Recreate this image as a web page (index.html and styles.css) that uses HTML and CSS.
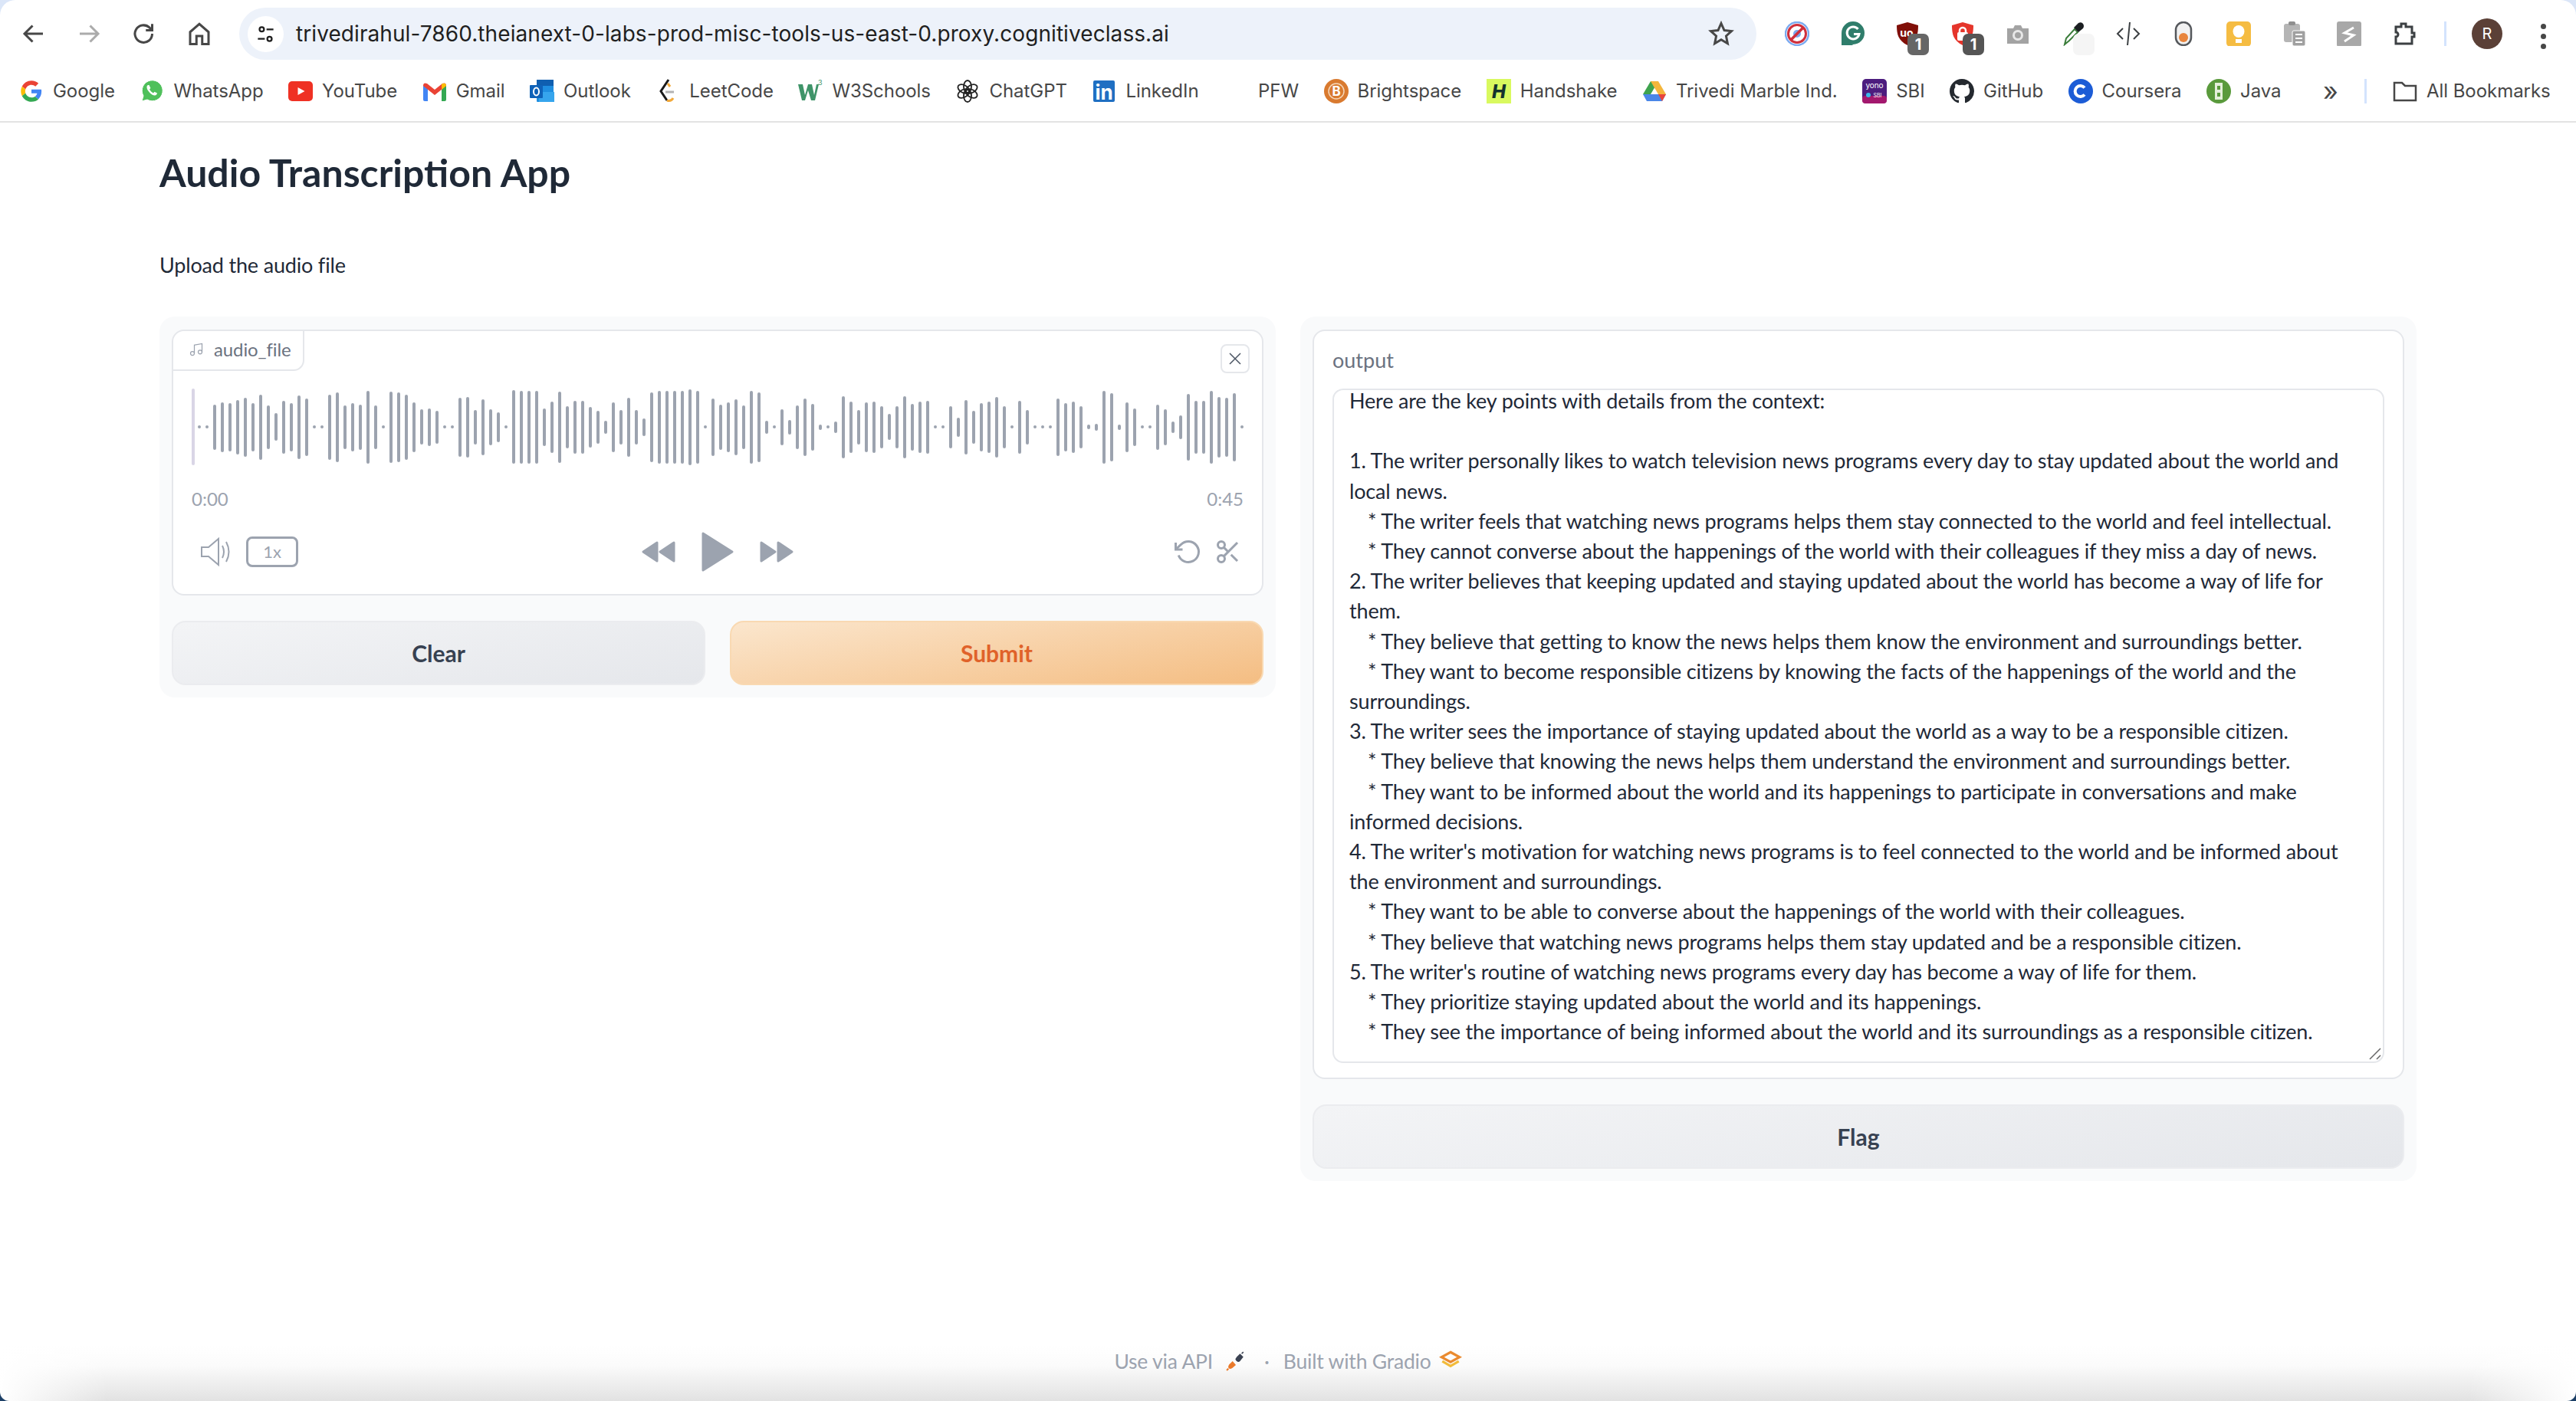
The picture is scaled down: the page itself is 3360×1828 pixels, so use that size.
FILE: index.html
```html
<!DOCTYPE html>
<html lang="en">
<head>
  <meta charset="UTF-8">
  <title>Audio Transcription App</title>
  <link rel="stylesheet" href="styles.css">
</head>
<body>

  <header class="chrome">
    <div class="toolbar">
      <div class="nav">
        <svg class="nav-icon" viewBox="0 0 24 24"><path d="M20 12H5M11 5l-7 7 7 7"/></svg>
        <svg class="nav-icon off" viewBox="0 0 24 24"><path d="M4 12h15M13 5l7 7-7 7"/></svg>
        <svg class="nav-icon" viewBox="0 0 24 24"><path d="M19 12a7.5 7.5 0 1 1-2.4-5.4L19 9M19 3.5V9h-5.5"/></svg>
        <svg class="nav-icon" viewBox="0 0 24 24"><path d="M4 10.5 12 3.5l8 7V21h-5.5v-7h-5v7H4z"/></svg>
      </div>
      <div class="omnibox">
        <span class="site-btn">
          <svg viewBox="0 0 24 24"><circle cx="7.5" cy="6.5" r="2.6"/><path d="M13 6.5h8M3 17.5h8"/><circle cx="16.5" cy="17.5" r="2.6"/></svg>
        </span>
        <span class="url">trivedirahul-7860.theianext-0-labs-prod-misc-tools-us-east-0.proxy.cognitiveclass.ai</span>
        <svg class="star" viewBox="0 0 24 24"><path d="m12 3 2.7 6 6.3.7-4.7 4.3 1.3 6.5L12 17.2 6.4 20.5 7.7 14 3 9.7 9.3 9z"/></svg>
      </div>
      <div class="extensions">
        <span class="ext">
          <svg viewBox="0 0 32 32"><circle cx="16" cy="16" r="15" fill="#fff" stroke="#7baaf0" stroke-width="2.5"/><circle cx="16" cy="16" r="5" fill="#7baaf0"/><circle cx="16" cy="16" r="11.5" fill="none" stroke="#cf2f3c" stroke-width="3"/><path d="M8 24 24 8" stroke="#cf2f3c" stroke-width="3.5"/></svg>
        </span>
        <span class="ext">
          <svg viewBox="0 0 32 32"><circle cx="17" cy="15" r="15" fill="#2f7d6b"/><path d="M2 15v16h15z" fill="#2f7d6b"/><path d="M23.5 10a8 8 0 1 0 1.5 6.5h-7" fill="none" stroke="#fff" stroke-width="3"/></svg>
        </span>
        <span class="ext">
          <svg viewBox="0 0 32 32"><path d="M16 1 30 5c0 12-2 20-14 26C4 25 2 17 2 5z" fill="#800f08"/><text x="15" y="20" class="ext-text">uo</text></svg>
          <b class="badge">1</b>
        </span>
        <span class="ext">
          <svg viewBox="0 0 32 32"><path d="M16 1 30 5c0 12-2 20-14 26C4 25 2 17 2 5z" fill="#e5352b"/><rect x="9" y="14" width="14" height="11" rx="2" fill="#fff"/><path d="M12 15v-3a4 4 0 0 1 8 0v3" fill="none" stroke="#fff" stroke-width="2.5"/></svg>
          <b class="badge dark">1</b>
        </span>
        <span class="ext">
          <svg viewBox="0 0 32 32"><path d="M2 9h8l2-4h8l2 4h8v20H2z" fill="#a3a3a3"/><circle cx="16" cy="18" r="5.5" fill="none" stroke="#e8e8e8" stroke-width="3"/></svg>
        </span>
        <span class="ext">
          <svg viewBox="0 0 32 32"><path d="M5 30 7 22 18 10l4 4-11 11z" fill="#fff" stroke="#3a7d3a" stroke-width="2"/><path d="m17 8 6-6q4-2 6 1t0 6l-6 5z" fill="#1c1f22"/></svg>
          <b class="badge blank"></b>
        </span>
        <span class="ext">
          <svg viewBox="0 0 32 32" class="line-ext"><path d="m9 9-7 7 7 7M23 9l7 7-7 7M18 1l-3 30"/></svg>
        </span>
        <span class="ext">
          <svg viewBox="0 0 32 32"><rect x="6" y="1" width="20" height="30" rx="10" fill="#f1f1f1" stroke="#55585c" stroke-width="2.5"/><circle cx="16" cy="21" r="6" fill="#e8853d"/></svg>
        </span>
        <span class="ext">
          <svg viewBox="0 0 32 32"><rect width="32" height="33" rx="5" fill="#f5bc42"/><ellipse cx="16" cy="13" rx="7.5" ry="8" fill="#fff"/><rect x="12" y="23" width="8" height="5" fill="#fff"/></svg>
        </span>
        <span class="ext">
          <svg viewBox="0 0 32 32"><rect x="3" y="3" width="21" height="24" rx="3" fill="#b5b5b5"/><rect x="9" y="0" width="9" height="5" rx="2" fill="#8f8f8f"/><rect x="14" y="12" width="17" height="20" rx="2" fill="#a0a0a0" stroke="#fff"/><path d="M18 17h9M18 22h9M18 27h9" stroke="#fff" stroke-width="2"/></svg>
        </span>
        <span class="ext">
          <svg viewBox="0 0 32 32"><rect width="32" height="33" rx="3" fill="#a8a8a8"/><path d="M22 8 10 15l12 3-12 8" fill="none" stroke="#fff" stroke-width="3"/></svg>
        </span>
        <span class="ext">
          <svg viewBox="0 0 32 32" class="line-ext thick"><path d="M5 7h7V3h6v4h8v8h3v5h-3v9H5v-9a3 3 0 0 0 0-6z"/></svg>
        </span>
      </div>
      <span class="bar-divider"></span>
      <span class="avatar">R</span>
      <span class="kebab"><i></i><i></i><i></i></span>
    </div>

    <nav class="bookmarks">
      <a class="bm">
        <svg class="bm-icon" viewBox="-4 -4 56 56"><path fill="#EA4335" d="M24 9.5c3.54 0 6.71 1.22 9.21 3.6l6.85-6.85C35.9 2.38 30.47 0 24 0 14.62 0 6.51 5.38 2.56 13.22l7.98 6.19C12.43 13.72 17.74 9.5 24 9.5z"/><path fill="#4285F4" d="M46.98 24.55c0-1.57-.15-3.09-.38-4.55H24v9.02h12.94c-.58 2.96-2.26 5.48-4.78 7.18l7.73 6c4.51-4.18 7.09-10.36 7.09-17.65z"/><path fill="#FBBC05" d="M10.53 28.59c-.48-1.45-.76-2.99-.76-4.59s.27-3.14.76-4.59l-7.98-6.19C.92 16.46 0 20.12 0 24c0 3.88.92 7.54 2.56 10.78l7.97-6.19z"/><path fill="#34A853" d="M24 48c6.48 0 11.93-2.13 15.89-5.81l-7.73-6c-2.15 1.45-4.92 2.3-8.16 2.3-6.26 0-11.57-4.22-13.47-9.91l-7.98 6.19C6.51 42.62 14.62 48 24 48z"/></svg>
        Google
      </a>
      <a class="bm">
        <svg class="bm-icon" viewBox="0 0 32 32"><path d="M3 29l2-7A13.5 13.5 0 1 1 10 27z" fill="#4fc05b" stroke="#fff"/><path d="M11 8c-2 1-2 4 0 7s5 6 8 6.5 4-2 4-3l-3.5-1.7-1.5 1.7c-2-1-4-3-5-5l1.4-1.5L12.5 8z" fill="#fff"/></svg>
        WhatsApp
      </a>
      <a class="bm">
        <svg class="bm-icon" viewBox="0 0 32 32"><rect y="3" width="32" height="26" rx="5" fill="#ef3124"/><path d="m12.5 11 9 5-9 5z" fill="#fff"/></svg>
        YouTube
      </a>
      <a class="bm">
        <svg class="bm-icon" viewBox="0 0 32 32"><path d="M1 8v19q0 2 2 2h4V13z" fill="#4285f4"/><path d="M31 8v19q0 2-2 2h-4V13z" fill="#34a853"/><path d="M1 9q0-5 5-3l10 8 10-8q5-2 5 3l-15 12z" fill="#ea4335"/><path d="M25 6.5V14l6-5q0-5-6-2.5z" fill="#fbbc04"/></svg>
        Gmail
      </a>
      <a class="bm">
        <svg class="bm-icon" viewBox="0 0 32 32"><rect x="9" y="1" width="22" height="29" rx="1" fill="#1f8ee0"/><rect x="9" y="1" width="22" height="8" fill="#0f5fb0"/><path d="M12 17h20v13H12z" fill="#36a5ed"/><rect y="8" width="17" height="17" rx="1" fill="#0f62b8"/><ellipse cx="8.5" cy="16.5" rx="3.5" ry="5" fill="none" stroke="#fff" stroke-width="2"/></svg>
        Outlook
      </a>
      <a class="bm">
        <svg class="bm-icon" viewBox="0 0 32 32"><path d="M17 1 7 16l8 12" fill="none" stroke="#1a1a1a" stroke-width="3"/><path d="m19 10-3-4M15 28q5 2 8-3" fill="none" stroke="#f2a93b" stroke-width="3"/><path d="M13 17h11" stroke="#b3b3b3" stroke-width="3"/></svg>
        LeetCode
      </a>
      <a class="bm">
        <svg class="bm-icon" viewBox="0 0 32 32"><path d="M0 7h6l3 14 4-14h5l3 14 3-14h3l-5 21h-5L13 15 9 28H5z" fill="#3f9469"/><text x="26" y="8" class="w3-sup">3</text></svg>
        W3Schools
      </a>
      <a class="bm">
        <svg class="bm-icon" viewBox="0 0 32 32"><g fill="none" stroke="#222" stroke-width="1.8"><ellipse cx="16" cy="10" rx="5" ry="8"/><ellipse cx="16" cy="10" rx="5" ry="8" transform="rotate(60 16 16)"/><ellipse cx="16" cy="10" rx="5" ry="8" transform="rotate(120 16 16)"/><ellipse cx="16" cy="10" rx="5" ry="8" transform="rotate(180 16 16)"/><ellipse cx="16" cy="10" rx="5" ry="8" transform="rotate(240 16 16)"/><ellipse cx="16" cy="10" rx="5" ry="8" transform="rotate(300 16 16)"/></g></svg>
        ChatGPT
      </a>
      <a class="bm">
        <svg class="bm-icon" viewBox="0 0 32 32"><rect x="2" y="2" width="28" height="28" rx="2" fill="#1f6fc2"/><text x="16" y="27" class="li-text">in</text></svg>
        LinkedIn
      </a>
      <a class="bm pfw">PFW</a>
      <a class="bm">
        <svg class="bm-icon" viewBox="0 0 32 32"><circle cx="16" cy="16" r="16" fill="#d97a2f"/><circle cx="16" cy="16" r="10" fill="none" stroke="#f6d7b8" stroke-width="1.5"/><text x="16" y="22" class="round-text">B</text></svg>
        Brightspace
      </a>
      <a class="bm">
        <svg class="bm-icon" viewBox="0 0 32 32"><rect width="32" height="32" fill="#d9f95f"/><text x="16" y="25" class="hs-text">H</text></svg>
        Handshake
      </a>
      <a class="bm">
        <svg class="bm-icon" viewBox="0 0 32 32"><path d="M11 3h10L11 20H1z" fill="#3ea34e"/><path d="M11 3h10l10 17H21z" fill="#f4b63c"/><path d="M1 20h30l-5 9H6z" fill="#4a86e8"/><path d="M21 20h10l-5 9z" fill="#e8453c"/></svg>
        Trivedi Marble Ind.
      </a>
      <a class="bm">
        <svg class="bm-icon" viewBox="0 0 32 32"><rect width="32" height="32" rx="5" fill="#4c1c7e"/><rect y="22" width="32" height="10" rx="4" fill="#a3186e"/><text x="16" y="12" class="yono">yono</text><circle cx="8" cy="21" r="3" fill="#39b8e8"/><text x="20" y="24" class="yono small">SBI</text></svg>
        SBI
      </a>
      <a class="bm">
        <svg class="bm-icon" viewBox="0 0 16 16"><path fill="#24292f" d="M8 0C3.58 0 0 3.58 0 8c0 3.54 2.29 6.53 5.47 7.59.4.07.55-.17.55-.38 0-.19-.01-.82-.01-1.49-2.01.37-2.53-.49-2.69-.94-.09-.23-.48-.94-.82-1.13-.28-.15-.68-.52-.01-.53.63-.01 1.08.58 1.23.82.72 1.21 1.87.87 2.33.66.07-.52.28-.87.51-1.07-1.78-.2-3.64-.89-3.64-3.95 0-.87.31-1.59.82-2.15-.08-.2-.36-1.02.08-2.12 0 0 .67-.21 2.2.82.64-.18 1.32-.27 2-.27.68 0 1.36.09 2 .27 1.53-1.04 2.2-.82 2.2-.82.44 1.1.16 1.92.08 2.12.51.56.82 1.27.82 2.15 0 3.07-1.87 3.75-3.65 3.95.29.25.54.73.54 1.48 0 1.07-.01 1.93-.01 2.2 0 .21.15.46.55.38A8.013 8.013 0 0016 8c0-4.42-3.58-8-8-8z"/></svg>
        GitHub
      </a>
      <a class="bm">
        <svg class="bm-icon" viewBox="0 0 32 32"><circle cx="16" cy="16" r="16" fill="#1c5cd6"/><path d="M21 11.5a7 7 0 1 0 0 9" fill="none" stroke="#fff" stroke-width="4"/></svg>
        Coursera
      </a>
      <a class="bm">
        <svg class="bm-icon" viewBox="0 0 32 32"><circle cx="16" cy="16" r="16" fill="#5a9a3c"/><rect x="11" y="5" width="10" height="22" fill="#e4efda"/><rect x="14" y="9" width="4" height="5" fill="#5a9a3c"/><rect x="14" y="18" width="4" height="5" fill="#5a9a3c"/></svg>
        Java
      </a>
      <span class="more">»</span>
      <span class="bar-divider short"></span>
      <a class="bm all">
        <svg class="bm-icon folder" viewBox="0 0 32 32"><path d="M2 5h10l4 4h14v19H2z"/></svg>
        All Bookmarks
      </a>
    </nav>
  </header>

  <main class="app">
    <h1>Audio Transcription App</h1>
    <p class="desc">Upload the audio file</p>

    <div class="columns">
      <section class="panel">
        <div class="card audio">
          <div class="tag">
            <svg viewBox="0 0 24 24"><path d="M9 18V5l12-2v13"/><circle cx="6" cy="18" r="3"/><circle cx="18" cy="16" r="3"/></svg>
            audio_file
          </div>
          <button class="close">
            <svg viewBox="0 0 24 24"><path d="M5 5l14 14M19 5 5 19"/></svg>
          </button>
          <div class="wave-wrap">
            <span class="cursor"></span>
            <div class="wave" id="wave"></div>
          </div>
          <div class="times"><span>0:00</span><span>0:45</span></div>
          <div class="controls">
            <div class="ctrl-left">
              <svg class="speaker" viewBox="0 0 40 40"><path d="M2 14h9l13-11v34L11 26H2z"/><path d="M29 12q4 8 0 16M34 7q7 13 0 26"/></svg>
              <span class="rate">1x</span>
            </div>
            <div class="ctrl-mid">
              <svg class="skip" viewBox="0 0 44 28"><path d="M20 2v24L2 14zM42 2v24L24 14z"/></svg>
              <svg class="play" viewBox="0 0 42 52"><path d="M2 2v48l38-24z"/></svg>
              <svg class="skip" viewBox="0 0 44 28"><path d="M2 2v24l18-12zM24 2v24l18-12z"/></svg>
            </div>
            <div class="ctrl-right">
              <svg class="undo" viewBox="0 0 24 24"><path d="M1 4v6h6"/><path d="M3.51 15a9 9 0 1 0 2.13-9.36L1 10"/></svg>
              <svg class="undo" viewBox="0 0 24 24"><circle cx="6" cy="6" r="3"/><circle cx="6" cy="18" r="3"/><path d="M20 4 8.12 15.88M14.47 14.48 20 20M8.12 8.12 12 12"/></svg>
            </div>
          </div>
        </div>
        <div class="btn-row">
          <button class="btn">Clear</button>
          <button class="btn primary">Submit</button>
        </div>
      </section>

      <section class="panel">
        <div class="card result">
          <label class="result-label">output</label>
          <div class="output-box">
            <div class="output-text">
              <div>Here are the key points with details from the context:</div>
              <br>
              <div>1. The writer personally likes to watch television news programs every day to stay updated about the world and</div>
              <div>local news.</div>
              <div class="sub">* The writer feels that watching news programs helps them stay connected to the world and feel intellectual.</div>
              <div class="sub">* They cannot converse about the happenings of the world with their colleagues if they miss a day of news.</div>
              <div>2. The writer believes that keeping updated and staying updated about the world has become a way of life for</div>
              <div>them.</div>
              <div class="sub">* They believe that getting to know the news helps them know the environment and surroundings better.</div>
              <div class="sub">* They want to become responsible citizens by knowing the facts of the happenings of the world and the</div>
              <div>surroundings.</div>
              <div>3. The writer sees the importance of staying updated about the world as a way to be a responsible citizen.</div>
              <div class="sub">* They believe that knowing the news helps them understand the environment and surroundings better.</div>
              <div class="sub">* They want to be informed about the world and its happenings to participate in conversations and make</div>
              <div>informed decisions.</div>
              <div>4. The writer's motivation for watching news programs is to feel connected to the world and be informed about</div>
              <div>the environment and surroundings.</div>
              <div class="sub">* They want to be able to converse about the happenings of the world with their colleagues.</div>
              <div class="sub">* They believe that watching news programs helps them stay updated and be a responsible citizen.</div>
              <div>5. The writer's routine of watching news programs every day has become a way of life for them.</div>
              <div class="sub">* They prioritize staying updated about the world and its happenings.</div>
              <div class="sub">* They see the importance of being informed about the world and its surroundings as a responsible citizen.</div>
            </div>
            <svg class="grip" viewBox="0 0 16 16"><path d="M1 15 15 1M10 15l5-5"/></svg>
          </div>
        </div>
        <button class="btn flag">Flag</button>
      </section>
    </div>
  </main>

  <footer class="foot">
    <span>Use via API</span>
    <svg class="foot-icon" viewBox="0 0 24 24"><path d="m13 7 4-4 4 4-4 5q-2 2-4 0l-1-1q-1-2 1-4z" fill="#3b4252"/><path d="m19 3 2-2M12 9l3 3" stroke="#3b4252" stroke-width="1.5"/><path d="M4 16q-2 3-.5 4.500T8 20l4-3.500-4-4.500z" fill="#ea7a2b"/><path d="m3 21-2 2" stroke="#ea7a2b" stroke-width="2"/></svg>
    <span class="foot-dot">·</span>
    <span>Built with Gradio</span>
    <svg class="foot-icon logo" viewBox="0 0 28 24"><path d="M14 2 25 8l-11 6L3 8z" fill="none" stroke="#ea8a2f" stroke-width="3"/><path d="m4 13 10 6 10-6" fill="none" stroke="#f2bb3a" stroke-width="3"/></svg>
  </footer>

  <script src="waveform.js"></script>
</body>
</html>
```

FILE: styles.css
```css
* {
  box-sizing: border-box;
}

body {
  margin: 0;
  height: 1828px;
  overflow: hidden;
  display: flex;
  flex-direction: column;
  font-family: "Lato", "Noto Sans", sans-serif;
  color: #1f2937;
  background: #1c3f66;
}

/* browser chrome */
.chrome {
  background: #dbe6f8;
  border-bottom: 2px solid #e3e3e3;
  font-family: "Inter", "Liberation Sans", sans-serif;
}

.toolbar {
  height: 79px;
  padding: 10px 0 0 8px;
  display: flex;
  background: #fff;
  border-radius: 20px 20px 0 0;
}

.nav {
  display: flex;
  height: 68px;
  align-items: center;
  gap: 36px;
  width: 304px;
  padding-left: 18px;
}

.nav-icon {
  width: 36px;
  height: 36px;
  fill: none;
  stroke: #474747;
  stroke-width: 2;
}

.nav-icon.off {
  stroke: #ababab;
}

.omnibox {
  width: 1979px;
  height: 68px;
  display: flex;
  align-items: center;
  padding: 0 28px 0 11px;
  background: #edf2fa;
  border-radius: 34px;
}

.site-btn {
  width: 47px;
  height: 47px;
  flex: none;
  padding: 10px;
  background: #fff;
  border-radius: 50%;
}

.site-btn svg {
  display: block;
  fill: none;
  stroke: #1f1f1f;
  stroke-width: 2;
}

.url {
  flex: 1;
  margin-left: 16px;
  font-size: 28px;
  letter-spacing: 0.08px;
  color: #1f1f1f;
}

.star {
  width: 36px;
  height: 36px;
  fill: none;
  stroke: #474747;
  stroke-width: 2;
}

.extensions {
  display: flex;
  margin-left: 17px;
}

.ext {
  position: relative;
  width: 72px;
  height: 68px;
  display: flex;
  align-items: center;
  justify-content: center;
}

.ext svg {
  width: 32px;
  height: 32px;
}

.line-ext {
  fill: none;
  stroke: #3c4043;
  stroke-width: 2;
}

.line-ext.thick {
  stroke-width: 3;
}

.ext-text {
  fill: #fff;
  font-size: 14px;
  font-weight: 700;
  text-anchor: middle;
}

.badge {
  position: absolute;
  left: 36px;
  top: 34px;
  width: 28px;
  height: 28px;
  font-size: 20px;
  line-height: 28px;
  text-align: center;
  color: #fff;
  background: #666;
  border-radius: 7px;
}

.badge.dark {
  background: #555;
}

.badge.blank {
  background: #f5f5f5;
}

.bar-divider {
  width: 3px;
  height: 32px;
  margin: 18px 0 0 16px;
  background: #d3e3fd;
}

.avatar {
  width: 40px;
  height: 40px;
  margin: 14px 0 0 33px;
  border-radius: 50%;
  background: #5b4037;
  color: #fff;
  font-size: 20px;
  line-height: 40px;
  text-align: center;
}

.kebab {
  display: flex;
  flex-direction: column;
  gap: 6px;
  margin: 21px 0 0 50px;
}

.kebab i {
  width: 7px;
  height: 7px;
  border-radius: 50%;
  background: #474747;
}

/* bookmarks */
.bookmarks {
  height: 79px;
  display: flex;
  align-items: center;
  padding-left: 25px;
  background: #fff;
  font-size: 24px;
  letter-spacing: -0.05px;
  color: #474747;
  white-space: nowrap;
}

.bm {
  display: flex;
  align-items: center;
  gap: 12px;
  margin-right: 32.5px;
}

.bm-icon {
  width: 32px;
  height: 32px;
  flex: none;
}

.pfw {
  margin-left: 45px;
}

.more {
  width: 44px;
  margin-left: 22px;
  font-size: 34px;
  line-height: 1;
}

.bar-divider.short {
  margin: 0 34px 0 10px;
}

.all {
  margin-right: 0;
}

.folder {
  fill: none;
  stroke: #474747;
  stroke-width: 2.5;
}

.w3-sup {
  font-size: 9px;
  fill: #3f9469;
}

.li-text {
  font-size: 26px;
  font-weight: 700;
  fill: #fff;
  text-anchor: middle;
}

.round-text {
  font-size: 17px;
  font-weight: 700;
  fill: #fff;
  text-anchor: middle;
}

.hs-text {
  font-size: 24px;
  font-weight: 800;
  font-style: italic;
  fill: #14322e;
  text-anchor: middle;
}

.yono {
  font-size: 10px;
  fill: #fff;
  text-anchor: middle;
}

.yono.small {
  font-size: 7px;
}

/* app */
.app {
  flex: 1;
  padding: 0 208px;
  background: #fff;
}

h1 {
  margin: 0;
  padding-top: 34px;
  font-size: 50px;
  line-height: 62px;
  font-weight: 700;
}

.desc {
  margin: 0;
  padding-top: 70px;
  font-size: 27px;
  letter-spacing: -0.18px;
  line-height: 40px;
}

.columns {
  display: grid;
  grid-template-columns: minmax(0, 1fr) minmax(0, 1fr);
  gap: 32px;
  align-items: start;
  margin-top: 47px;
}

.panel {
  display: flex;
  flex-direction: column;
  gap: 33px;
  padding: 17px 16px 16px;
  background: #f9fafb;
  border-radius: 20px;
}

.card {
  position: relative;
  background: #fff;
  border: 2px solid #e5e7eb;
  border-radius: 16px;
}

.audio {
  height: 347px;
  padding: 0 24px;
}

.tag {
  position: absolute;
  left: 0;
  top: 0;
  width: 171px;
  height: 52px;
  display: flex;
  align-items: center;
  gap: 13px;
  padding: 0 0 3px 20px;
  font-size: 24px;
  letter-spacing: -0.1px;
  color: #6b7280;
  background: #fff;
  border-right: 2px solid #e5e7eb;
  border-bottom: 2px solid #e5e7eb;
  border-radius: 16px 0 14px 0;
}

.tag svg {
  width: 20px;
  height: 20px;
  fill: none;
  stroke: #9ca3af;
  stroke-width: 1.5;
}

.close {
  position: absolute;
  right: 16px;
  top: 17px;
  width: 38px;
  height: 38px;
  padding: 5px;
  background: #fff;
  border: 2px solid #e5e7eb;
  border-radius: 8px;
}

.close svg {
  display: block;
  fill: none;
  stroke: #4b5563;
  stroke-width: 1.5;
}

.wave-wrap {
  position: relative;
  height: 100px;
  margin-top: 75px;
}

.cursor {
  position: absolute;
  left: 0;
  top: 0;
  width: 4px;
  height: 100px;
  border-radius: 2px;
  background: #d9d5e6;
}

.wave {
  height: 100px;
  display: flex;
  align-items: center;
  gap: 6px;
  padding-left: 8px;
}

.wave i {
  flex: none;
  width: 4px;
  min-height: 4px;
  border-radius: 2px;
  background: #9ca3af;
}

.times {
  display: flex;
  justify-content: space-between;
  height: 30px;
  margin-top: 29px;
  font-size: 24px;
  line-height: 30px;
  color: #9ca3af;
}

.controls {
  display: grid;
  grid-template-columns: 1fr auto 1fr;
  align-items: center;
  height: 52px;
  margin-top: 28px;
}

.ctrl-left {
  display: flex;
  align-items: center;
  gap: 20px;
  padding-left: 11px;
}

.speaker {
  width: 40px;
  height: 40px;
  fill: none;
  stroke: #9ca3af;
  stroke-width: 2;
}

.rate {
  width: 68px;
  height: 40px;
  font-size: 22px;
  line-height: 34px;
  text-align: center;
  color: #9ca3af;
  border: 3px solid #9ca3af;
  border-radius: 8px;
}

.ctrl-mid {
  display: flex;
  align-items: center;
  gap: 34px;
}

.skip {
  width: 44px;
  height: 28px;
  fill: #9ca3af;
  stroke: #9ca3af;
  stroke-width: 3;
  stroke-linejoin: round;
}

.play {
  width: 42px;
  height: 52px;
  fill: #9ca3af;
  stroke: #9ca3af;
  stroke-width: 3;
  stroke-linejoin: round;
}

.ctrl-right {
  display: flex;
  justify-content: flex-end;
  gap: 16px;
  padding-right: 2px;
}

.undo {
  width: 36px;
  height: 36px;
  fill: none;
  stroke: #9ca3af;
  stroke-width: 2;
}

.btn-row {
  display: grid;
  grid-template-columns: minmax(0, 1fr) minmax(0, 1fr);
  gap: 32px;
}

.btn {
  height: 84px;
  font-family: inherit;
  font-size: 30px;
  font-weight: 700;
  color: #374151;
  background: linear-gradient(170deg, #f3f4f6, #e5e7eb);
  border: 2px solid #ebecef;
  border-radius: 18px;
}

.btn.primary {
  color: #e0622a;
  background: linear-gradient(170deg, #fbe6cd, #f4bd82);
  border-color: #f9d9b2;
}

.result {
  height: 978px;
  padding: 0 24px;
}

.result-label {
  display: block;
  height: 75px;
  padding-top: 20px;
  font-size: 27px;
  line-height: 36px;
  color: #6b7280;
}

.output-box {
  position: relative;
  height: 880px;
  padding: 0 20px;
  overflow: hidden;
  border: 2px solid #e5e7eb;
  border-radius: 14px;
  background: #fff;
}

.output-text {
  margin-top: -6px;
  font-size: 27px;
  letter-spacing: -0.18px;
  line-height: 39.2px;
  white-space: nowrap;
}

.sub {
  padding-left: 24px;
}

.grip {
  position: absolute;
  right: 2px;
  bottom: 2px;
  width: 16px;
  height: 16px;
  fill: none;
  stroke: #666;
  stroke-width: 1.5;
}

.flag {
  width: 100%;
}

/* footer */
.foot {
  height: 104px;
  display: flex;
  justify-content: center;
  align-items: flex-start;
  padding-top: 36px;
  font-size: 26.5px;
  letter-spacing: -0.2px;
  line-height: 32px;
  color: #9ca3af;
  background:
    linear-gradient(90deg, #fff, rgba(255, 255, 255, 0) 140px),
    linear-gradient(270deg, #fff, rgba(255, 255, 255, 0) 140px),
    linear-gradient(180deg, #fff 30%, #fbfbfb 55%, #e2e2e2 100%);
  border-radius: 0 0 12px 12px;
}

.foot-icon {
  width: 26px;
  height: 26px;
  margin: 3px 24px 0 17px;
}

.foot-icon.logo {
  width: 30px;
  margin: 2px 0 0 10px;
}

.foot-dot {
  margin-right: 18px;
}
```

FILE: waveform.js
```js
// bar heights in px, 0 means a dot
const heights = [
  0, 0, 59, 65, 63, 71, 77, 63, 85, 57, 36, 69, 63, 83, 75, 0, 0, 85, 91, 57, 63, 59, 95, 57, 0,
  93, 91, 85, 65, 46, 49, 43, 0, 0, 77, 79, 45, 73, 47, 39, 0, 96, 95, 95, 95, 49, 67, 93, 55,
  69, 69, 53, 43, 17, 65, 45, 77, 45, 23, 91, 95, 95, 95, 95, 99, 95, 0, 75, 59, 65, 73, 57, 95,
  91, 17, 0, 47, 19, 57, 75, 61, 7, 0, 15, 81, 67, 45, 65, 67, 55, 34, 55, 81, 61, 67, 69, 0, 0,
  55, 25, 71, 43, 63, 67, 79, 55, 0, 69, 45, 0, 0, 0, 75, 63, 67, 55, 6, 9, 95, 89, 7, 65, 49, 0,
  0, 59, 47, 15, 31, 87, 69, 69, 95, 79, 77, 89, 0
];

const wave = document.getElementById('wave');
heights.forEach((h) => {
  const bar = document.createElement('i');
  bar.style.height = h + 'px';
  wave.appendChild(bar);
});
```
